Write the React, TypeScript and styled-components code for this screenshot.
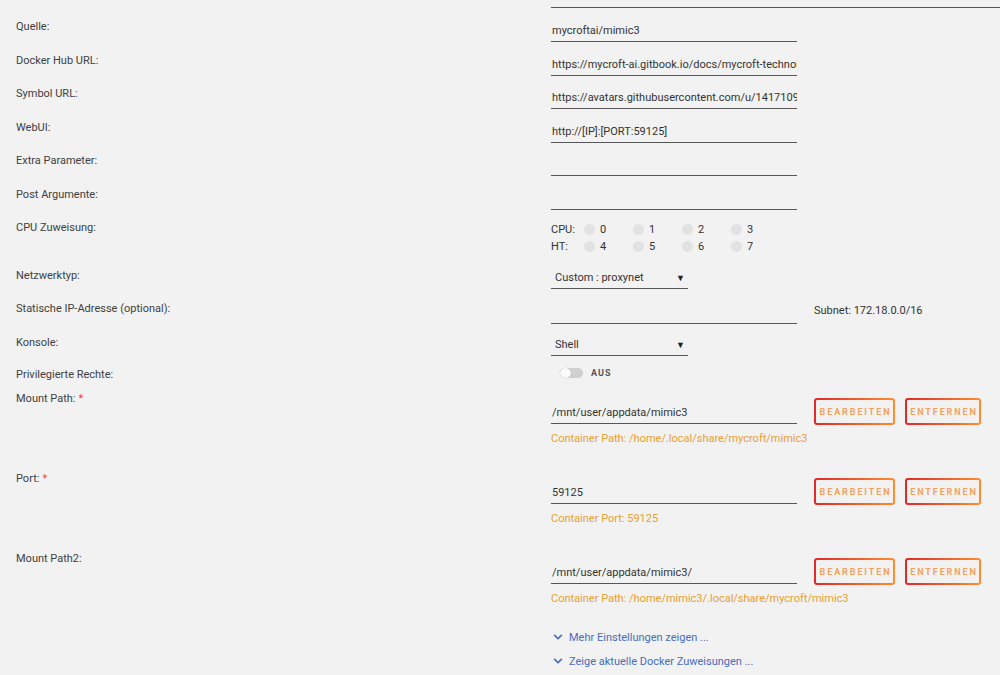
import React from "react";
import styled, { createGlobalStyle } from "styled-components";
import { FaChevronDown } from "react-icons/fa";

const Global = createGlobalStyle`
  html, body { margin: 0; padding: 0; background: #f2f2f2; }
  body { font-family: Roboto, "Liberation Sans", sans-serif; font-size: 11px; color: #3c3c3c; overflow: hidden; }
  * { box-sizing: border-box; }
`;

const Page = styled.div`
  width: 1000px;
  height: 675px;
  padding-left: 16px;
  background: #f2f2f2;
`;

const Row = styled.div<{ $h: number }>`
  display: grid;
  grid-template-columns: 535px 246px 1fr;
  align-items: start;
  height: ${(p) => p.$h}px;
`;

const Label = styled.div`
  padding-top: 2px;
  line-height: 14px;
  color: #404040;
  white-space: nowrap;
`;

const Req = styled.span`
  color: #e04b4b;
  margin-left: 3px;
`;

const Field = styled.div<{ $mt?: number }>`
  margin-top: ${(p) => p.$mt ?? 1}px;
  width: 246px;
  height: 23px;
  border-bottom: 1px solid #555;
  display: flex;
  align-items: center;
  padding-left: 1px;
  color: #333;
  white-space: nowrap;
  overflow: hidden;
`;

const TopLine = styled.div`
  width: 449px;
  height: 8px;
  border-bottom: 1px solid #555;
`;

const Select = styled.div`
  width: 137px;
  height: 22px;
  border-bottom: 1px solid #555;
  display: flex;
  align-items: center;
  justify-content: space-between;
  padding: 0 3px 0 4px;
  color: #333;
`;

const Arrow = styled.span`
  font-size: 9px;
  color: #222;
`;

const CpuGrid = styled.div`
  margin-top: 2px;
  display: grid;
  grid-template-columns: 33px repeat(4, 49px);
  grid-auto-rows: 17px;
  align-items: center;
  color: #333;
`;

const Cell = styled.div`
  display: flex;
  align-items: center;
  gap: 5px;
`;

const Dot = styled.span`
  width: 11px;
  height: 11px;
  border-radius: 50%;
  background: #e2e2e2;
`;

const Side = styled.div<{ $mt: number }>`
  margin-top: ${(p) => p.$mt}px;
  margin-left: 17px;
  line-height: 14px;
  color: #333;
  white-space: nowrap;
`;

const ToggleWrap = styled.div`
  margin-left: 9px;
  margin-top: 1px;
  display: flex;
  align-items: center;
  gap: 8px;
  height: 12px;
`;

const Track = styled.span`
  position: relative;
  width: 23px;
  height: 10px;
  border-radius: 5px;
  background: #cfcfcf;
`;

const Knob = styled.span`
  position: absolute;
  left: 0;
  top: 0;
  width: 11px;
  height: 10px;
  border-radius: 5px;
  background: #fafafa;
  box-shadow: 0 0 1px rgba(0, 0, 0, 0.25);
`;

const ToggleText = styled.span`
  font-size: 9px;
  font-weight: 700;
  letter-spacing: 1px;
  color: #555;
`;

const Stack = styled.div`
  display: flex;
  flex-direction: column;
  min-width: 0;
`;

const Hint = styled.div`
  margin-top: 8px;
  line-height: 14px;
  color: #e8a033;
  white-space: nowrap;
`;

const Buttons = styled.div`
  margin-top: 8px;
  margin-left: 17px;
  display: flex;
  gap: 10px;
`;

const Btn = styled.button<{ $w: number }>`
  width: ${(p) => p.$w}px;
  height: 27px;
  border: 2px solid transparent;
  border-radius: 3px;
  background: linear-gradient(#f2f2f2, #f2f2f2) padding-box,
    linear-gradient(90deg, #e22828, #ff8c2f) border-box;
  color: #f4a25c;
  font-family: Roboto, "Liberation Sans", sans-serif;
  font-size: 9px;
  font-weight: 700;
  letter-spacing: 1.9px;
  padding: 0 0 0 2px;
  cursor: pointer;
  white-space: nowrap;
`;

const Links = styled.div`
  padding-left: 537px;
  display: flex;
  flex-direction: column;
`;

const LinkLine = styled.a`
  height: 24px;
  display: flex;
  align-items: center;
  gap: 6px;
  color: #486dba;
  text-decoration: none;
  font-size: 11px;
`;

type Mount = { label: string; req: boolean; value: string; hint: string };

const PathRow = ({ label, req, value, hint, h }: Mount & { h: number }) => (
  <Row $h={h}>
    <Label>
      {label}
      {req && <Req>*</Req>}
    </Label>
    <Stack>
      <Field $mt={11}>{value}</Field>
      <Hint>{hint}</Hint>
    </Stack>
    <Buttons>
      <Btn $w={81}>BEARBEITEN</Btn>
      <Btn $w={76}>ENTFERNEN</Btn>
    </Buttons>
  </Row>
);

const textRows: [string, string, number][] = [
  ["Quelle:", "mycroftai/mimic3", 34],
  ["Docker Hub URL:", "https://mycroft-ai.gitbook.io/docs/mycroft-technology-overview/mimic-tts/mimic-3", 33],
  ["Symbol URL:", "https://avatars.githubusercontent.com/u/14171097?s=200&v=4", 34],
  ["WebUI:", "http://[IP]:[PORT:59125]", 33],
  ["Extra Parameter:", "", 34],
  ["Post Argumente:", "", 33],
];

export default function App() {
  return (
    <Page>
      <Global />
      <Row $h={18}>
        <div />
        <TopLine />
      </Row>
      {textRows.map(([l, v, h]) => (
        <Row key={l} $h={h}>
          <Label>{l}</Label>
          <Field>{v}</Field>
        </Row>
      ))}
      <Row $h={48}>
        <Label>CPU Zuweisung:</Label>
        <CpuGrid>
          <span>CPU:</span>
          {[0, 1, 2, 3].map((n) => (
            <Cell key={n}>
              <Dot />
              {n}
            </Cell>
          ))}
          <span>HT:</span>
          {[4, 5, 6, 7].map((n) => (
            <Cell key={n}>
              <Dot />
              {n}
            </Cell>
          ))}
        </CpuGrid>
      </Row>
      <Row $h={33}>
        <Label>Netzwerktyp:</Label>
        <Select>
          Custom : proxynet<Arrow>▼</Arrow>
        </Select>
      </Row>
      <Row $h={34}>
        <Label>Statische IP-Adresse (optional):</Label>
        <Field />
        <Side $mt={4}>Subnet: 172.18.0.0/16</Side>
      </Row>
      <Row $h={32}>
        <Label>Konsole:</Label>
        <Select>
          Shell<Arrow>▼</Arrow>
        </Select>
      </Row>
      <Row $h={24}>
        <Label>Privilegierte Rechte:</Label>
        <ToggleWrap>
          <Track>
            <Knob />
          </Track>
          <ToggleText>AUS</ToggleText>
        </ToggleWrap>
      </Row>
      <PathRow h={80} label="Mount Path:" req value="/mnt/user/appdata/mimic3" hint="Container Path: /home/.local/share/mycroft/mimic3" />
      <PathRow h={80} label="Port:" req value="59125" hint="Container Port: 59125" />
      <PathRow h={75} label="Mount Path2:" req={false} value="/mnt/user/appdata/mimic3/" hint="Container Path: /home/mimic3/.local/share/mycroft/mimic3" />
      <Links>
        <LinkLine href="#">
          <FaChevronDown size={10} />
          Mehr Einstellungen zeigen ...
        </LinkLine>
        <LinkLine href="#">
          <FaChevronDown size={10} />
          Zeige aktuelle Docker Zuweisungen ...
        </LinkLine>
      </Links>
    </Page>
  );
}
